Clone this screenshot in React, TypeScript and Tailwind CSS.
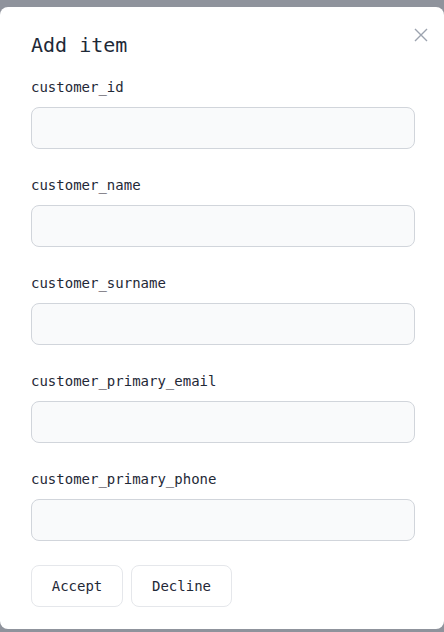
import React from "react";

const fields = [
  "customer_id",
  "customer_name",
  "customer_surname",
  "customer_primary_email",
  "customer_primary_phone",
];

export default function App() {
  return (
    <div
      className="w-[444px] h-[632px] bg-[#8f939c] pt-[7px] overflow-hidden"
      style={{ fontFamily: '"DejaVu Sans Mono", "Liberation Mono", monospace' }}
    >
      <div className="relative bg-white rounded-lg h-[622px] pl-[31px] pr-[29px] pt-[24px]">
        <button className="absolute right-[16px] top-[21px] text-[#9ca3af]">
          <svg width="14" height="14" viewBox="0 0 14 14" fill="none" stroke="currentColor" strokeWidth="1.4">
            <path d="M1 1 L13 13 M13 1 L1 13" />
          </svg>
        </button>
        <h2 className="text-[20px] leading-[28px] text-[#1f2937]">Add item</h2>
        <div className="mt-[18px] flex flex-col">
          {fields.map((f) => (
            <div key={f} className="mb-[26px]">
              <label className="block text-[14px] leading-[20px] text-[#1f2937]">{f}</label>
              <input className="mt-[10px] block w-full h-[42px] rounded-lg border border-[#d1d5db] bg-[#f9fafb] outline-none" />
            </div>
          ))}
        </div>
        <div className="flex gap-2 -mt-[2px]">
          <button className="h-[42px] w-[92px] rounded-lg border border-[#e5e7eb] text-[14px] text-[#1f2937]">Accept</button>
          <button className="h-[42px] w-[101px] rounded-lg border border-[#e5e7eb] text-[14px] text-[#1f2937]">Decline</button>
        </div>
      </div>
    </div>
  );
}
